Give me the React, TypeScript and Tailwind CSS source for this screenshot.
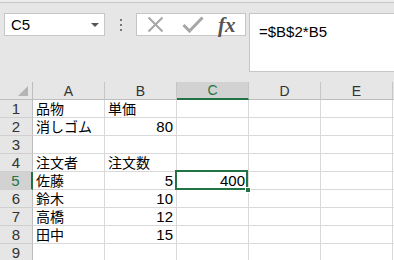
import React from "react";

const rows: { n: number; a: string; b: string; c: string }[] = [
  { n: 1, a: "品物", b: "単価", c: "" },
  { n: 2, a: "消しゴム", b: "80", c: "" },
  { n: 3, a: "", b: "", c: "" },
  { n: 4, a: "注文者", b: "注文数", c: "" },
  { n: 5, a: "佐藤", b: "5", c: "400" },
  { n: 6, a: "鈴木", b: "10", c: "" },
  { n: 7, a: "高橋", b: "12", c: "" },
  { n: 8, a: "田中", b: "15", c: "" },
  { n: 9, a: "", b: "", c: "" },
];

const isNum = (s: string) => /^[0-9]+$/.test(s);
const sansFont = { fontFamily: '"Liberation Sans", Arial, sans-serif' };

function Cell({ v, selected }: { v: string; selected?: boolean }) {
  return (
    <div
      className={`relative w-[72px] h-[18px] shrink-0 border-r border-b border-[#d9d9d9] bg-white px-[3px] text-[14px] leading-[17px] text-black whitespace-nowrap overflow-visible ${
        isNum(v) ? "text-right" : "text-left"
      } ${selected ? "z-10" : ""}`}
    >
      {v && (
        <span className="block h-[17px] leading-[17px]" style={isNum(v) ? { fontFamily: '"Liberation Sans", Arial, sans-serif', fontSize: "15px" } : undefined}>
          {v}
        </span>
      )}
      {selected && (
        <>
          <div className="absolute -left-[2px] -top-[2px] w-[73px] h-[20px] border-2 border-[#217346] pointer-events-none" />
          <div className="absolute -right-[3px] -bottom-[4px] w-[6px] h-[6px] bg-[#217346] border border-white" />
        </>
      )}
    </div>
  );
}

export default function App() {
  return (
    <div
      className="w-[394px] h-[260px] overflow-hidden bg-[#e6e6e6] flex flex-col"
      style={{ fontFamily: '"Noto Sans CJK JP", "Noto Sans", sans-serif' }}
    >
      <div className="h-[2px] shrink-0 bg-[#ececec]" />
      <div className="h-px shrink-0 bg-[#c6c6c6]" />
      <div className="h-[79px] shrink-0 flex items-start pt-[10px]">
        {/* name box */}
        <div className="ml-[4px] w-[101px] h-[23px] shrink-0 bg-white border border-[#c6c6c6] flex items-center pl-[6px] pr-[5px]">
          <span className="text-[15px] leading-[18px] text-black flex-1" style={sansFont}>C5</span>
          <svg width="8" height="4" viewBox="0 0 8 4">
            <polygon points="0,0 8,0 4,4" fill="#555" />
          </svg>
        </div>
        {/* colon dots */}
        <div className="w-[31px] h-[23px] shrink-0 flex flex-col items-center justify-center gap-[3px]">
          <div className="w-[2px] h-[2px] bg-[#777]" />
          <div className="w-[2px] h-[2px] bg-[#777]" />
          <div className="w-[2px] h-[2px] bg-[#777]" />
        </div>
        {/* buttons */}
        <div className="w-[110px] h-[23px] shrink-0 bg-white border border-[#c6c6c6] flex items-center">
          <svg className="ml-[10px]" width="17" height="17" viewBox="0 0 17 17">
            <path d="M1.5 1.5 L15.5 15.5 M15.5 1.5 L1.5 15.5" stroke="#a6a6a6" strokeWidth="2" fill="none" />
          </svg>
          <svg className="ml-[18px]" width="22" height="17" viewBox="0 0 22 17">
            <path d="M1.5 9 L7.5 15 L20.5 1.5" stroke="#a6a6a6" strokeWidth="3" fill="none" />
          </svg>
          <span
            className="ml-[14px] text-[21px] leading-[22px] italic font-bold text-[#555]"
            style={{ fontFamily: '"Liberation Serif", serif' }}
          >
            fx
          </span>
        </div>
        {/* formula box */}
        <div className="ml-[3px] flex-1 h-[59px] bg-white border-l border-t border-b border-[#c6c6c6] pl-[9px] pt-[4px]">
          <span className="text-[15px] leading-[18px] text-black" style={sansFont}>=$B$2*B5</span>
        </div>
      </div>
      {/* header row */}
      <div className="h-[18px] shrink-0 flex bg-[#e6e6e6]" style={sansFont}>
        <div className="w-[33px] h-[18px] shrink-0 border-r border-b border-[#bdbdbd] flex items-end justify-end pr-[4px] pb-[3px]">
          <svg width="10" height="10" viewBox="0 0 10 10">
            <polygon points="10,0 10,10 0,10" fill="#b4b4b4" />
          </svg>
        </div>
        {["A", "B", "C", "D", "E"].map((l) => (
          <div
            key={l}
            className={`w-[72px] h-[18px] shrink-0 border-r border-[#c6c6c6] flex items-center justify-center text-[14px] leading-[16px] ${
              l === "C"
                ? "bg-[#d2d2d2] text-[#217346] border-b-2 border-b-[#217346]"
                : "text-[#333] border-b border-b-[#bdbdbd]"
            }`}
          >
            {l}
          </div>
        ))}
        <div className="flex-1 h-[18px] border-b border-[#bdbdbd]" />
      </div>
      {rows.map((r) => {
        const sel = r.n === 5;
        return (
          <div key={r.n} className="h-[18px] shrink-0 flex">
            <div
              className={`w-[33px] h-[18px] shrink-0 border-b border-[#d0d0d0] flex items-center justify-center text-[15px] leading-[17px] ${
                sel
                  ? "bg-[#d2d2d2] text-[#217346] border-r-2 border-r-[#217346]"
                  : "bg-[#e6e6e6] text-[#333] border-r border-r-[#bdbdbd]"
              }`}
              style={sansFont}
            >
              {r.n}
            </div>
            <Cell v={r.a} />
            <Cell v={r.b} />
            <Cell v={r.c} selected={sel} />
            <Cell v="" />
            <Cell v="" />
            <div className="flex-1 h-[18px] bg-white border-b border-[#d9d9d9]" />
          </div>
        );
      })}
    </div>
  );
}
